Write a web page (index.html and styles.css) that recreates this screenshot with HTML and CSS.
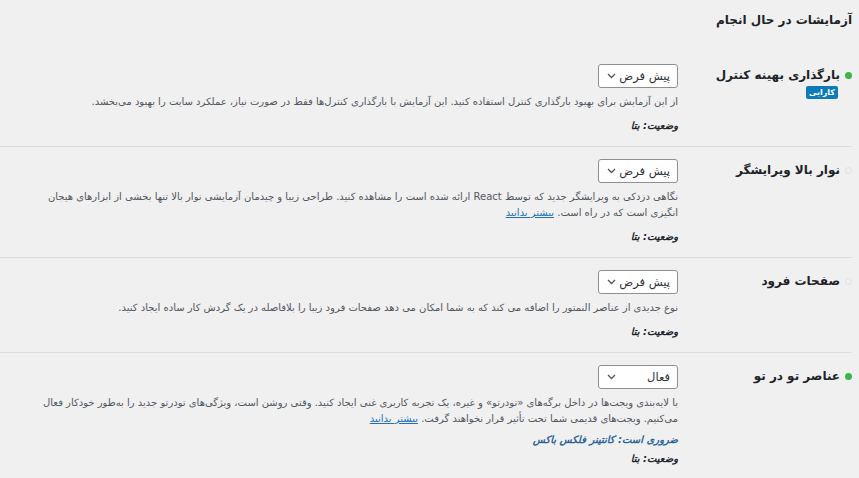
FILE: index.html
```html
<!DOCTYPE html>
<html lang="fa" dir="rtl">
<head>
<meta charset="utf-8">
<title>آزمایشات در حال انجام</title>
<link rel="stylesheet" href="styles.css">
</head>
<body>
<div class="page">
  <h2 class="heading">آزمایشات در حال انجام</h2>

  <div class="row">
    <div class="label">
      <span class="dot dot-on"></span>
      <div class="label-text">
        <div class="name">بارگذاری بهینه کنترل</div>
        <span class="badge">کارایی</span>
      </div>
    </div>
    <div class="field">
      <div class="select"><span>پیش فرض</span><svg class="chev" width="9" height="6" viewBox="0 0 9 6"><path d="M1 1l3.5 3.5L8 1" fill="none" stroke="#50575e" stroke-width="1.3"/></svg></div>
      <p class="desc">از این آزمایش برای بهبود بارگذاری کنترل استفاده کنید. این آزمایش با بارگذاری کنترل‌ها فقط در صورت نیاز، عملکرد سایت را بهبود می‌بخشد.</p>
      <p class="status">وضعیت: بتا</p>
    </div>
  </div>

  <div class="row">
    <div class="label">
      <span class="dot dot-off"></span>
      <div class="label-text">
        <div class="name">نوار بالا ویرایشگر</div>
      </div>
    </div>
    <div class="field">
      <div class="select"><span>پیش فرض</span><svg class="chev" width="9" height="6" viewBox="0 0 9 6"><path d="M1 1l3.5 3.5L8 1" fill="none" stroke="#50575e" stroke-width="1.3"/></svg></div>
      <p class="desc">نگاهی دزدکی به ویرایشگر جدید که توسط React ارائه شده است را مشاهده کنید. طراحی زیبا و چیدمان آزمایشی نوار بالا تنها بخشی از ابزارهای هیجان انگیزی است که در راه است. <a href="#" class="link">بیشتر بدانید</a></p>
      <p class="status">وضعیت: بتا</p>
    </div>
  </div>

  <div class="row">
    <div class="label">
      <span class="dot dot-off"></span>
      <div class="label-text">
        <div class="name">صفحات فرود</div>
      </div>
    </div>
    <div class="field">
      <div class="select"><span>پیش فرض</span><svg class="chev" width="9" height="6" viewBox="0 0 9 6"><path d="M1 1l3.5 3.5L8 1" fill="none" stroke="#50575e" stroke-width="1.3"/></svg></div>
      <p class="desc">نوع جدیدی از عناصر النمتور را اضافه می کند که به شما امکان می دهد صفحات فرود زیبا را بلافاصله در یک گردش کار ساده ایجاد کنید.</p>
      <p class="status">وضعیت: بتا</p>
    </div>
  </div>

  <div class="row">
    <div class="label">
      <span class="dot dot-on"></span>
      <div class="label-text">
        <div class="name">عناصر تو در تو</div>
      </div>
    </div>
    <div class="field">
      <div class="select"><span>فعال</span><svg class="chev" width="9" height="6" viewBox="0 0 9 6"><path d="M1 1l3.5 3.5L8 1" fill="none" stroke="#50575e" stroke-width="1.3"/></svg></div>
      <p class="desc">با لایه‌بندی ویجت‌ها در داخل برگه‌های «تودرتو» و غیره، یک تجربه کاربری غنی ایجاد کنید. وقتی روشن است، ویژگی‌های تودرتو جدید را به‌طور خودکار فعال می‌کنیم. ویجت‌های قدیمی شما تحت تأثیر قرار نخواهند گرفت. <a href="#" class="link">بیشتر بدانید</a></p>
      <p class="required">ضروری است: کانتینر فلکس باکس</p>
      <p class="status status-tight">وضعیت: بتا</p>
    </div>
  </div>
</div>
</body>
</html>
```

FILE: styles.css
```css
html, body {
  margin: 0;
  padding: 0;
  background: #f0f0f1;
}
body {
  direction: rtl;
  font-family: "DejaVu Sans", "Noto Sans", sans-serif;
  color: #1d2327;
  font-size: 12px;
}
.page {
  padding: 0 7px 0 0;
}
.heading {
  margin: 0 0 22px 0;
  padding-top: 10px;
  font-size: 12px;
  line-height: 20px;
  font-weight: bold;
  color: #1d2327;
}
.row {
  display: grid;
  grid-template-columns: 174px 1fr;
  border-bottom: 1px solid #dcdcde;
  padding: 12px 0 12px 0;
}
.row:last-child {
  border-bottom: none;
}
.label {
  display: flex;
  align-items: flex-start;
}
.dot {
  flex: none;
  width: 7px;
  height: 7px;
  border-radius: 50%;
  margin-top: 8px;
  margin-left: 5px;
  box-sizing: border-box;
}
.dot-on {
  background: #39b54a;
}
.dot-off {
  border: 1px solid #e2e2e4;
  background: #f0f0f1;
}
.label-text {
  display: block;
  text-align: right;
}
.name {
  font-weight: bold;
  font-size: 12px;
  line-height: 22px;
  color: #1d2327;
}
.badge {
  display: inline-block;
  margin-right: 2px;
  background: #0c7bb8;
  color: #fff;
  font-size: 8px;
  font-weight: bold;
  line-height: 13px;
  padding: 0 3px;
  border-radius: 2px;
  vertical-align: top;
}
.field {
  padding-left: 36px;
}
.select {
  width: 80px;
  height: 24px;
  box-sizing: border-box;
  border: 1px solid #8c8f94;
  border-radius: 3px;
  background: #fff;
  display: flex;
  align-items: center;
  justify-content: space-between;
  padding: 0 7px 0 8px;
  font-size: 11.5px;
  color: #2c3338;
}
.chev {
  display: block;
}
.desc {
  margin: 6px 0 0 0;
  font-size: 10px;
  line-height: 16px;
  color: #50575e;
}
.link {
  color: #2271b1;
  text-decoration: underline;
}
.required {
  margin: 5px 0 0 0;
  font-size: 10px;
  line-height: 16px;
  font-weight: bold;
  font-style: italic;
  color: #2a6496;
}
.status {
  margin: 8px 0 0 0;
  font-size: 10px;
  line-height: 16px;
  font-weight: bold;
  font-style: italic;
  color: #1d2327;
}
.status-tight {
  margin-top: 3px;
}
```
